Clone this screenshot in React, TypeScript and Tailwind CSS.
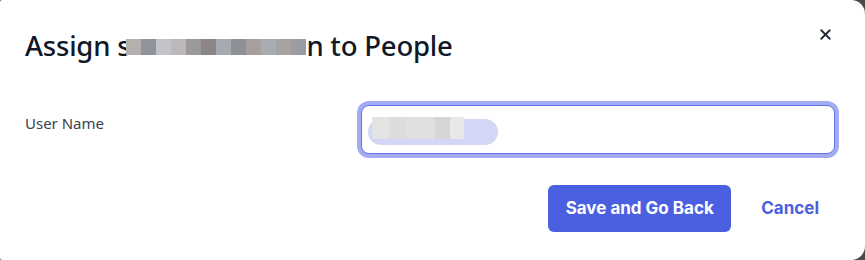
import { X } from 'lucide-react'

const titleBlocks = [
  'bg-[#b4b0ae]',
  'bg-[#8f939b]',
  'bg-[#c3c3c8]',
  'bg-[#bdb8b8]',
  'bg-[#9a999c]',
  'bg-[#8c8688]',
  'bg-[#a7abaf]',
  'bg-[#8f8f97]',
  'bg-[#a59f9d]',
  'bg-[#a9adb1]',
  'bg-[#a6a3a1]',
  'bg-[#9a9ca3]',
]

function RedactedName() {
  return (
    <span className="inline-flex items-center h-[28px] align-middle -mt-[4px] -ml-[4px]">
      {titleBlocks.map((c, i) => (
        <span key={i} className={`inline-block w-[15px] h-[16px] ${c}`} />
      ))}
    </span>
  )
}

function RedactedValue() {
  return (
    <div className="relative w-[135px] h-[34px]">
      <div className="absolute left-[2px] top-[6px] w-[130px] h-[26px] rounded-full bg-[#d3d7f7]" />
      <div className="absolute left-[6px] top-[4px] w-[92px] h-[22px] flex">
        <span className="w-[18px] h-full bg-[#e3e3e3]" />
        <span className="w-[15px] h-full bg-[#dcdcdc]" />
        <span className="w-[30px] h-full bg-[#e0e0e0]" />
        <span className="w-[15px] h-full bg-[#d5d5d5]" />
        <span className="w-[14px] h-full bg-[#e8e8e8]" />
      </div>
    </div>
  )
}

export default function App() {
  return (
    <div className="w-[865px] h-[260px] bg-[#4a4a4a]">
      <div
        className="relative w-full h-full bg-white rounded-l-[2px] rounded-r-[14px] px-[25px] pt-[28px]"
        style={{ fontFamily: '"Noto Sans", "Open Sans", sans-serif' }}
      >
        <button className="absolute right-[31px] top-[26px] text-[#1f2937]">
          <X size={17} strokeWidth={2.6} />
        </button>

        <h2 className="text-[27.5px] leading-[36px] font-medium text-[#111827] tracking-[-0.2px]">
          Assign s<RedactedName />n to People
        </h2>

        <div className="mt-[41px] flex items-start">
          <label className="w-[336px] pt-[8px] text-[15px] leading-[20px] text-[#374151]">
            User Name
          </label>
          <div className="w-[474px] h-[49px] rounded-[8px] border border-[#6673e4] ring-4 ring-[#a3acf3] bg-white flex items-center pl-[4px] overflow-hidden">
            <RedactedValue />
          </div>
        </div>

        <div
          className="mt-[31px] flex items-center justify-end gap-[30px] pr-[21px]"
          style={{ fontFamily: 'Inter, "Liberation Sans", sans-serif' }}
        >
          <button className="h-[47px] w-[183px] rounded-[6px] bg-[#4a60e0] text-white text-[17px] font-bold">
            Save and Go Back
          </button>
          <button className="text-[17px] font-bold text-[#4a60e0]">Cancel</button>
        </div>
      </div>
    </div>
  )
}
